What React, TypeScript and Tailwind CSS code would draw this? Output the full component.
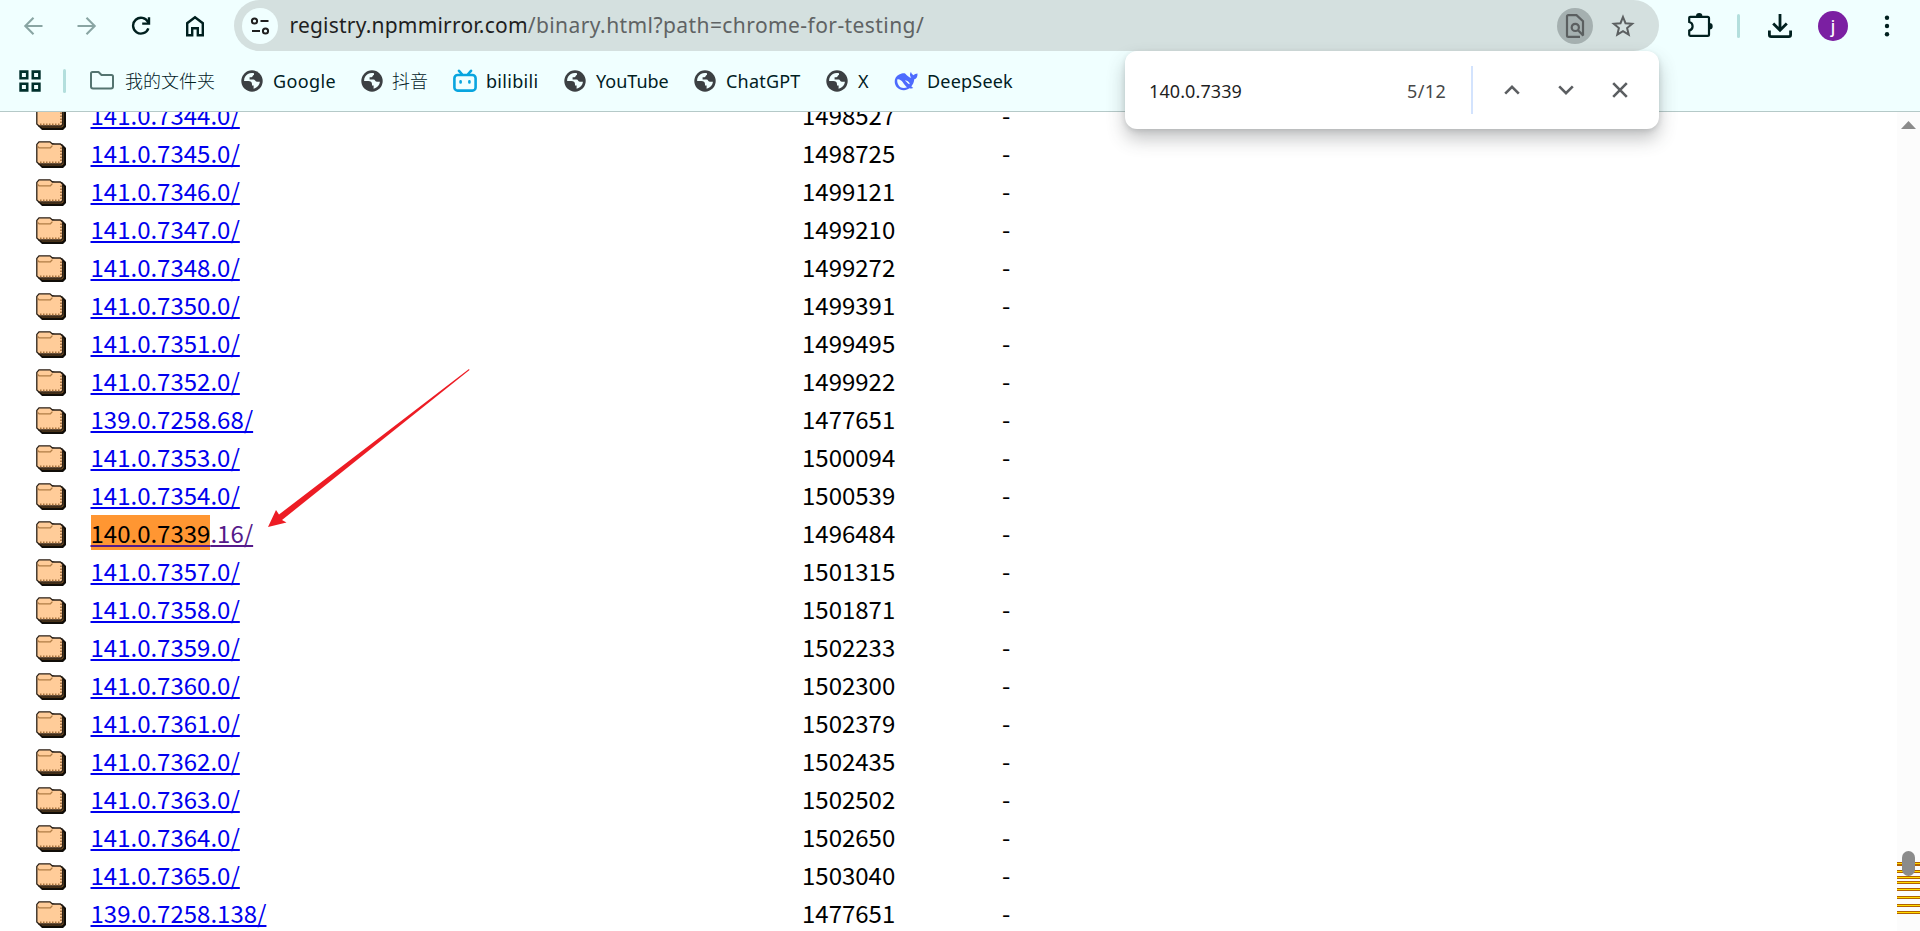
import { ReactNode } from "react";

type Entry = {
  name: string;
  revision: string;
  match?: string;
};

type BookmarkProps = {
  icon: ReactNode;
  label: string;
  className: string;
};

const entries: Entry[] = [
  { name: "141.0.7344.0/", revision: "1498527" },
  { name: "141.0.7345.0/", revision: "1498725" },
  { name: "141.0.7346.0/", revision: "1499121" },
  { name: "141.0.7347.0/", revision: "1499210" },
  { name: "141.0.7348.0/", revision: "1499272" },
  { name: "141.0.7350.0/", revision: "1499391" },
  { name: "141.0.7351.0/", revision: "1499495" },
  { name: "141.0.7352.0/", revision: "1499922" },
  { name: "139.0.7258.68/", revision: "1477651" },
  { name: "141.0.7353.0/", revision: "1500094" },
  { name: "141.0.7354.0/", revision: "1500539" },
  { name: ".16/", revision: "1496484", match: "140.0.7339" },
  { name: "141.0.7357.0/", revision: "1501315" },
  { name: "141.0.7358.0/", revision: "1501871" },
  { name: "141.0.7359.0/", revision: "1502233" },
  { name: "141.0.7360.0/", revision: "1502300" },
  { name: "141.0.7361.0/", revision: "1502379" },
  { name: "141.0.7362.0/", revision: "1502435" },
  { name: "141.0.7363.0/", revision: "1502502" },
  { name: "141.0.7364.0/", revision: "1502650" },
  { name: "141.0.7365.0/", revision: "1503040" },
  { name: "139.0.7258.138/", revision: "1477651" },
];

// distance of each find result from the top of the scrollbar
const marks = [751, 750, 758, 764, 769, 776, 784, 792, 799];

const GlobeIcon = () => (
  <svg width="24" height="24" viewBox="0 0 24 24">
    <circle cx="12" cy="12" r="10.7" fill="#3c4043" />
    <path
      d="M14 4.3C10.2 3.4 6.8 4.9 5.1 7.8C4.3 9.2 4 10.6 4.1 12H8.3C10.6 12 12 13.2 12 15.2V16.4H13.6V19.8C17 18.8 19.6 16.2 19.9 12.8H17.1C15.2 12.8 15.2 10.5 13.5 10.5H9.6V8.2H11.5C13.1 8.2 12.4 6 14 6Z"
      fill="#f0ffff"
    />
  </svg>
);

const BilibiliIcon = () => (
  <svg width="24" height="24" viewBox="0 0 24 24" fill="none" stroke="#08a5df" strokeWidth="2.6" strokeLinecap="round">
    <rect x="1.4" y="6" width="21.2" height="15.6" rx="3.2" />
    <path d="M6 1.8L8.8 5M18 1.8L15.2 5" />
    <path d="M7.6 12.2V13.4M16.4 12.2V13.4" />
  </svg>
);

const DeepSeekIcon = () => (
  <svg width="24" height="24" viewBox="0 0 24 24" fill="#4d6bfe">
    <path d="M23.5 4.4C21.9 4.7 20.6 4.8 19.5 6.2C18.3 5.5 17.2 4.6 17 2.8C15.6 4.5 15.6 6.9 17.2 8.7C15.3 8.4 14 7.4 12.8 6.2L11.1 4.4C9.8 4 7.2 4.5 5.2 5.4C2.3 6.8 .4 9.6.7 13C1.1 17.8 4.9 21.4 10 21.2C12.3 21.1 13.9 20.3 15.4 19.2C16.7 19.5 18.1 19.6 19.3 19.1C18.9 18.2 18 17.9 17.3 17.4C19 15.4 20 13.2 20.3 10.3C22.4 9.6 23.7 7.6 23.5 4.4Z" />
    <path d="M3.3 10.4C5.2 9.8 7.4 11.4 8.8 13.2C10.5 15.4 11.6 17.6 13.1 18.3C9.5 20.2 5.5 18.6 4.2 15.5C3.4 13.7 3 12 3.3 10.4ZM11 11.7C12.8 11.2 15.1 12.6 15.8 15.1C14.2 15.8 13.4 13 11 11.7Z" fill="#f0ffff" />
  </svg>
);

const BookmarkFolderIcon = () => (
  <svg width="24" height="24" viewBox="0 0 24 24" fill="none" stroke="#547470" strokeWidth="2" strokeLinejoin="round">
    <path d="M1 17.5V4.5Q1 3 2.5 3H8.5L11.5 6H21.5Q23 6 23 7.5V17.5Q23 19.5 21 19.5H3Q1 19.5 1 17.5Z" />
  </svg>
);

const FolderIcon = () => (
  <svg width="30" height="27" viewBox="0 0 30 27" className="shrink-0">
    <path d="M3 4L6 2H16L19 3H26L30 7V24L27 27H6L2 23Z" fill="#100d08" />
    <path d="M3 22.5L25.5 22.5L26.5 6L27.6 8V23L26 24.6H6Z" fill="#7d5527" />
    <path
      d="M.8 21V3.4L3 .8H14L16.4 3H24.4L26.6 5.2V21.4L25 23H3Z"
      fill="#ffcc99"
      stroke="#2b2118"
      strokeWidth="1.3"
    />
    <path d="M1.6 5.4L3 6.8H14.4L16.4 4.6" fill="none" stroke="#b07c45" strokeWidth="1.3" />
    <path d="M4 21.4H25M25 6.5V20.5" fill="none" stroke="#a87440" strokeWidth="1.8" strokeDasharray="1.5 1.5" />
  </svg>
);

const Bookmark = ({ icon, label, className }: BookmarkProps) => (
  <div className={`flex items-center shrink-0 whitespace-nowrap ${className}`}>
    {icon}
    <span className="pt-px">{label}</span>
  </div>
);

const Toolbar = () => (
  <div className="flex items-center h-[51px] pl-1.5 text-[#00201f]">
    <button className="w-[54px] h-[51px] flex items-center justify-center">
      <svg width="20" height="20" viewBox="0 0 20 20" fill="none" stroke="#89a5a3" strokeWidth="2.1">
        <path d="M19.5 10H2.5M10.5 1.8L2.3 10L10.5 18.2" />
      </svg>
    </button>
    <button className="w-[54px] h-[51px] flex items-center justify-center">
      <svg width="20" height="20" viewBox="0 0 20 20" fill="none" stroke="#89a5a3" strokeWidth="2.1">
        <path d="M.5 10H17.5M9.5 1.8L17.7 10L9.5 18.2" />
      </svg>
    </button>
    <button className="w-[54px] h-[51px] flex items-center justify-center">
      <svg width="20" height="20" viewBox="0 0 20 20" fill="none" stroke="currentColor" strokeWidth="2.4">
        <path d="M17.4 12.4A7.9 7.9 0 1 1 17 6L17.6 7.2" />
        <path d="M18 1.2V7.6H11.2" />
      </svg>
    </button>
    <button className="w-[54px] h-[51px] flex items-center justify-center">
      <svg width="20" height="22" viewBox="0 0 20 22" fill="none" stroke="currentColor" strokeWidth="2.4">
        <path d="M2.2 20.3V8.2L10 2.3L17.8 8.2V20.3H12.8V13.2H7.2V20.3Z" />
      </svg>
    </button>

    <div className="ml-3 w-[1425px] h-[51px] shrink-0 rounded-full bg-[#d4e0df] flex items-center px-2">
      <div className="size-9 mt-px rounded-full bg-[#f0ffff] flex items-center justify-center">
        <svg width="20" height="18" viewBox="0 0 20 18" fill="none" stroke="#1f1f1f" strokeWidth="2">
          <circle cx="4.5" cy="4" r="2.6" />
          <path d="M10.5 4H18.5M2 14H10" />
          <circle cx="15.5" cy="14" r="2.6" />
        </svg>
      </div>
      <p className="ml-[11.5px] font-['Noto_Sans',sans-serif] text-[21px] leading-none whitespace-nowrap text-[#5f6364]">
        <span className="text-[#1f1f1f] tracking-[0.2px]">registry.npmmirror.com</span>
        <span className="tracking-[0.42px]">/binary.html?path=chrome-for-testing/</span>
      </p>
      <div className="ml-auto mt-px size-9 rounded-full bg-[#a5b0b0] flex items-center justify-center">
        <svg width="20" height="24" viewBox="0 0 20 24" fill="none" stroke="#5b5f60" strokeWidth="2.2">
          <path d="M15 22.9H3.4Q2 22.9 2 21.5V2.5Q2 1.1 3.4 1.1H11.5L18 7.2V21.5" />
          <circle cx="10.3" cy="13.4" r="3.6" />
          <path d="M12.8 16L18.4 21.6" />
        </svg>
      </div>
      <svg width="24" height="24" viewBox="0 0 24 24" className="ml-[18px] mr-4" fill="none" stroke="#5b5f60" strokeWidth="2">
        <path d="M12 3L14.5 9.2L21.2 9.7L16.1 14L17.7 20.6L12 17.1L6.3 20.6L7.9 14L2.8 9.7L9.5 9.2Z" />
      </svg>
    </div>

    <button className="ml-[14px] w-[54px] h-[51px] flex items-center justify-center">
      <svg width="26" height="26" viewBox="0 0 26 26" className="-mt-0.5">
        <path
          d="M3.2 4.8H20.6Q22 4.8 22 6.2V22.4Q22 23.8 20.6 23.8H3.2Q2.2 23.8 2.2 22.8V18.6Q5.6 17.8 5.6 14.3Q5.6 10.8 2.2 10V5.8Q2.2 4.8 3.2 4.8Z"
          fill="none"
          stroke="currentColor"
          strokeWidth="2.2"
        />
        <path d="M9 4.2A3.2 3.2 0 0 1 15.4 4.2ZM22.5 11V17.4A3.2 3.2 0 0 0 22.5 11Z" fill="currentColor" />
      </svg>
    </button>
    <div className="ml-[10px] w-[3px] h-6 rounded-full bg-[#b3dfdd]" />
    <button className="ml-[13px] w-[54px] h-[51px] flex items-center justify-center">
      <svg width="24" height="24" viewBox="0 0 24 24" fill="none" stroke="currentColor" strokeWidth="2.8">
        <path d="M12 0V15.5M5.2 9.5L12 16.3L18.8 9.5" />
        <path d="M1.4 16.5V20.8Q1.4 22.6 3.2 22.6H20.8Q22.6 22.6 22.6 20.8V16.5" />
      </svg>
    </button>
    <div className="ml-[11px] mt-px size-[30px] rounded-full bg-[#7b1fa2] text-white flex items-center justify-center font-[Roboto,sans-serif] text-[19px] leading-none">
      j
    </div>
    <button className="ml-3 w-[54px] h-[51px] flex items-center justify-center">
      <svg width="6" height="22" viewBox="0 0 6 22" fill="currentColor">
        <circle cx="3" cy="2.7" r="2.2" />
        <circle cx="3" cy="11" r="2.2" />
        <circle cx="3" cy="19.3" r="2.2" />
      </svg>
    </button>
  </div>
);

const BookmarksBar = () => (
  <div className="flex items-center h-[61px] pl-[18px] border-b border-[#b5c9c8] text-[18px] text-[#00201f] font-['Noto_Sans','Noto_Sans_CJK_SC',sans-serif]">
    <svg width="24" height="24" viewBox="0 0 24 24" className="shrink-0" fill="none" stroke="#00302c" strokeWidth="2.6">
      <path d="M2.6 2.6H9.2V9.2H2.6ZM14.8 2.6H21.4V9.2H14.8ZM2.6 14.8H9.2V21.4H2.6ZM14.8 14.8H21.4V21.4H14.8Z" />
    </svg>
    <div className="ml-[21px] w-[3px] h-6 rounded-full bg-[#b3dfdd]" />
    <Bookmark className="ml-6 w-[150px] gap-[11px] font-light" icon={<BookmarkFolderIcon />} label="我的文件夹" />
    <Bookmark className="w-[120px] gap-[9px] tracking-[0.4px]" icon={<GlobeIcon />} label="Google" />
    <Bookmark className="w-[93px] gap-2 font-light" icon={<GlobeIcon />} label="抖音" />
    <Bookmark className="w-[110px] gap-[9px] tracking-[0.3px]" icon={<BilibiliIcon />} label="bilibili" />
    <Bookmark className="w-[130px] gap-[9px]" icon={<GlobeIcon />} label="YouTube" />
    <Bookmark className="w-[132px] gap-[9px] tracking-[0.2px]" icon={<GlobeIcon />} label="ChatGPT" />
    <Bookmark className="w-[69px] gap-[9px]" icon={<GlobeIcon />} label="X" />
    <Bookmark className="gap-[9px] tracking-[0.2px]" icon={<DeepSeekIcon />} label="DeepSeek" />
  </div>
);

const FindBar = () => (
  <div className="absolute left-[1125px] top-[51px] w-[534px] h-[78px] rounded-xl bg-white shadow-[0_10px_18px_rgba(60,64,67,0.3),0_2px_5px_rgba(60,64,67,0.15)] flex items-center pl-6 font-['Noto_Sans',sans-serif] text-[18px] text-[#1f1f1f]">
    <span className="w-[258px] pt-0.5 tracking-[0.1px]">140.0.7339</span>
    <span className="w-[64px] pt-0.5 text-[#474747] tracking-[0.4px]">5/12</span>
    <div className="w-0.5 h-12 bg-[#d3e3fd]" />
    <div className="flex text-[#5b5e61] ml-3">
      <button className="w-[54px] flex justify-center">
        <svg width="18" height="18" viewBox="0 0 18 18" fill="none" stroke="currentColor" strokeWidth="2.6">
          <path d="M2.2 12.6L9 5.8L15.8 12.6" />
        </svg>
      </button>
      <button className="w-[54px] flex justify-center">
        <svg width="18" height="18" viewBox="0 0 18 18" fill="none" stroke="currentColor" strokeWidth="2.6">
          <path d="M2.2 5.4L9 12.2L15.8 5.4" />
        </svg>
      </button>
      <button className="w-[54px] flex justify-center">
        <svg width="18" height="18" viewBox="0 0 18 18" fill="none" stroke="currentColor" strokeWidth="2.6">
          <path d="M2.2 2.2L15.8 15.8M15.8 2.2L2.2 15.8" />
        </svg>
      </button>
    </div>
  </div>
);

const Scrollbar = () => (
  <div className="relative w-[23px] h-full shrink-0 bg-[#fcfcfc]">
    <svg width="15" height="8" viewBox="0 0 15 8" className="mt-[9px] ml-1">
      <path d="M7.5 0L15 8H0Z" fill="#8b8b8b" />
    </svg>
    {marks.map((top) => (
      <div key={top} className="absolute inset-x-0 h-[3px] bg-[#ffdd00] border-y border-[#b36200]" style={{ top }} />
    ))}
    <div className="absolute left-[5px] top-[739px] w-[13px] h-[25px] rounded-full bg-[#8b8b8b]" />
  </div>
);

const App = () => {
  return (
    <div className="relative w-[1920px] h-[931px] overflow-hidden bg-white flex flex-col">
      <header className="h-28 shrink-0 bg-[#f0ffff]">
        <Toolbar />
        <BookmarksBar />
      </header>
      <main className="flex h-[819px] overflow-hidden">
        <div className="grow -mt-[15px] font-['Noto_Sans_CJK_SC',sans-serif] text-2xl text-black">
          {entries.map(({ name, revision, match }) => (
            <div key={match ?? name} className="flex items-center h-[38px] pl-9 leading-[36px]">
              <FolderIcon />
              <div className="h-[38px] w-[736px] shrink-0 pl-[24.5px]">
                <a
                  className={`${
                    match ? "text-[#551a8b]" : "text-[#0000ee]"
                  } underline decoration-2 underline-offset-[2px] [text-decoration-skip-ink:none]`}
                >
                  {match && <span className="bg-[#ff9632] text-black">{match}</span>}
                  {name}
                </a>
              </div>
              <span className="h-[38px] w-[200px]">{revision}</span>
              <span className="h-[38px]">-</span>
            </div>
          ))}
        </div>
        <Scrollbar />
      </main>
      <FindBar />
      <svg width="204" height="162" viewBox="0 0 204 162" className="absolute left-[267px] top-[367px]">
        <path d="M1 160L9 143L12 147.5L202 2L202.5 3L15 153L19.5 155.5Z" fill="#ed1c24" />
      </svg>
    </div>
  );
};

export default App;
